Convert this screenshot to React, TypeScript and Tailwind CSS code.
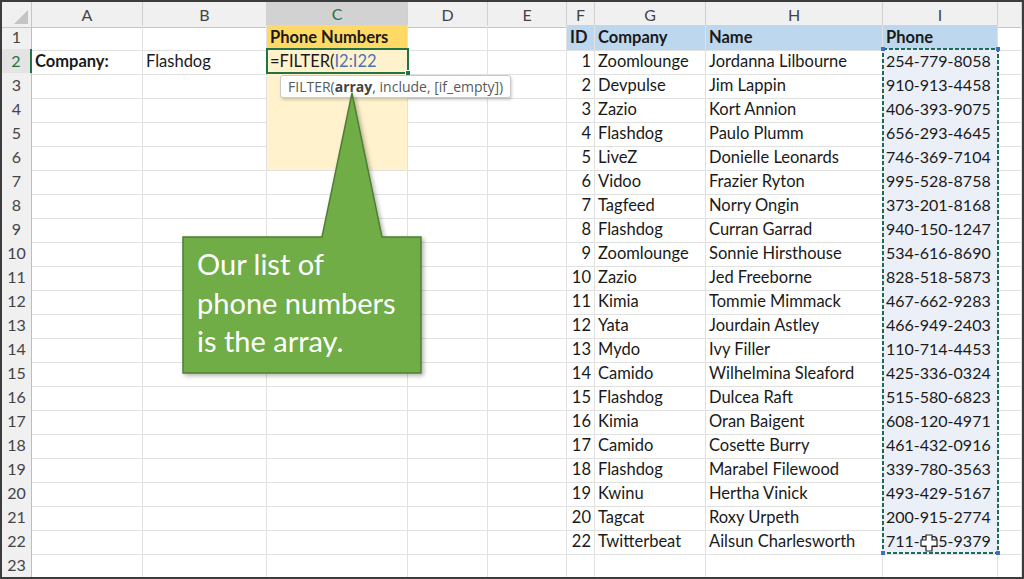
import React from "react";

const FONT = { fontFamily: "Lato, 'Open Sans', sans-serif" };

const data: [string, string, string, string][] = [
  ["1", "Zoomlounge", "Jordanna Lilbourne", "254-779-8058"],
  ["2", "Devpulse", "Jim Lappin", "910-913-4458"],
  ["3", "Zazio", "Kort Annion", "406-393-9075"],
  ["4", "Flashdog", "Paulo Plumm", "656-293-4645"],
  ["5", "LiveZ", "Donielle Leonards", "746-369-7104"],
  ["6", "Vidoo", "Frazier Ryton", "995-528-8758"],
  ["7", "Tagfeed", "Norry Ongin", "373-201-8168"],
  ["8", "Flashdog", "Curran Garrad", "940-150-1247"],
  ["9", "Zoomlounge", "Sonnie Hirsthouse", "534-616-8690"],
  ["10", "Zazio", "Jed Freeborne", "828-518-5873"],
  ["11", "Kimia", "Tommie Mimmack", "467-662-9283"],
  ["12", "Yata", "Jourdain Astley", "466-949-2403"],
  ["13", "Mydo", "Ivy Filler", "110-714-4453"],
  ["14", "Camido", "Wilhelmina Sleaford", "425-336-0324"],
  ["15", "Flashdog", "Dulcea Raft", "515-580-6823"],
  ["16", "Kimia", "Oran Baigent", "608-120-4971"],
  ["17", "Camido", "Cosette Burry", "461-432-0916"],
  ["18", "Flashdog", "Marabel Filewood", "339-780-3563"],
  ["19", "Kwinu", "Hertha Vinick", "493-429-5167"],
  ["20", "Tagcat", "Roxy Urpeth", "200-915-2774"],
  ["22", "Twitterbeat", "Ailsun Charlesworth", "711-525-9379"],
];

const GRID =
  "grid grid-cols-[30px_111px_124px_141px_80px_79px_28px_111px_177px_115px_24px]";

type CellProps = {
  children?: React.ReactNode;
  className?: string;
};

function Cell({ children, className = "" }: CellProps) {
  return (
    <div
      className={`flex items-center overflow-visible whitespace-nowrap border-r border-b border-[#e1e1e1] px-[3px] text-[#1a1a1a] ${className}`}
    >
      {children}
    </div>
  );
}

function ColHeader({ label, active }: { label: string; active?: boolean }) {
  return (
    <div
      className={`flex items-center justify-center border-r border-[#d0d0d0] text-[16px] ${
        active
          ? "bg-[#d2d2d2] text-[#217346] border-b-2 border-b-[#217346]"
          : "bg-[#f0f0f0] text-[#444] border-b border-b-[#c6c6c6]"
      }`}
    >
      {label}
    </div>
  );
}

function RowHeader({ n, active }: { n: number; active?: boolean }) {
  return (
    <div
      className={`flex items-center justify-center border-b border-[#d6d6d6] text-[16px] ${
        active
          ? "bg-[#e4e4e4] text-[#217346] border-r-2 border-r-[#217346]"
          : "bg-[#f0f0f0] text-[#444] border-r border-r-[#bdbdbd]"
      }`}
    >
      {n}
    </div>
  );
}

function Row({ r }: { r: number }) {
  const d = r >= 2 && r <= 22 ? data[r - 2] : null;
  const cBg =
    r === 1 ? "bg-[#ffd966]" : r >= 2 && r <= 6 ? "bg-[#fff2cc]" : "";
  const hd = "bg-[#bdd7ee] font-bold";
  return (
    <div className={`${GRID} h-[24px]`}>
      <RowHeader n={r} active={r === 2} />
      <Cell className="text-[16.5px] font-bold">{r === 2 ? "Company:" : ""}</Cell>
      <Cell className="text-[16.5px]">{r === 2 ? "Flashdog" : ""}</Cell>
      <Cell className={`text-[16.5px] ${cBg} ${r === 1 ? "font-bold" : ""}`}>
        {r === 1 ? "Phone Numbers" : r === 2 ? (
          <span>
            =FILTER(<span className="text-[#4a74b8]">I2:I22</span>
          </span>
        ) : ""}
      </Cell>
      <Cell />
      <Cell />
      <Cell className={`text-[16.5px] ${r === 1 ? `${hd} justify-start` : "justify-end"}`}>
        {r === 1 ? "ID" : d ? d[0] : ""}
      </Cell>
      <Cell className={`text-[16.5px] ${r === 1 ? hd : ""}`}>
        {r === 1 ? "Company" : d ? d[1] : ""}
      </Cell>
      <Cell className={`text-[16.5px] ${r === 1 ? hd : ""}`}>
        {r === 1 ? "Name" : d ? d[2] : ""}
      </Cell>
      <Cell
        className={`${r === 1 ? `text-[16.5px] ${hd}` : d ? "bg-[#ebf0f8] text-[16px]" : ""}`}
      >
        {r === 1 ? "Phone" : d ? d[3] : ""}
      </Cell>
      <Cell />
    </div>
  );
}

export default function App() {
  const rows = Array.from({ length: 23 }, (_, i) => i + 1);
  return (
    <div
      className="h-[579px] w-[1024px] overflow-hidden border-2 border-[#3c3c3c] bg-white"
      style={FONT}
    >
      <div className="relative h-full w-full">
        {/* column headers */}
        <div className={`${GRID} h-[23px]`}>
          <div className="relative border-r border-b border-[#c6c6c6] bg-[#f0f0f0]">
            <svg
              className="absolute right-[3px] bottom-[3px]"
              width="14"
              height="14"
              viewBox="0 0 14 14"
            >
              <polygon points="14,0 14,14 0,14" fill="#c4c4c4" />
            </svg>
          </div>
          {["A", "B", "C", "D", "E", "F", "G", "H", "I", ""].map((l) => (
            <ColHeader key={l || "J"} label={l} active={l === "C"} />
          ))}
        </div>
        {rows.map((r) => (
          <Row key={r} r={r} />
        ))}

        {/* selected cell C2 */}
        <div className="pointer-events-none absolute left-[264px] top-[46px] h-[26px] w-[143px] border-2 border-[#217346]">
          <div className="absolute -right-[4px] -bottom-[4px] h-[6px] w-[6px] border border-white bg-[#217346]" />
        </div>

        {/* marching ants around I2:I22 */}
        <svg
          className="pointer-events-none absolute left-[879px] top-[45px]"
          width="120"
          height="510"
          viewBox="0 0 120 510"
        >
          <rect
            x="2"
            y="2"
            width="115"
            height="504"
            fill="none"
            stroke="#1f6b5a"
            strokeWidth="2"
            strokeDasharray="4 2"
          />
          <rect x="0" y="0" width="4" height="4" fill="#3d6fc6" />
          <rect x="115" y="0" width="4" height="4" fill="#3d6fc6" />
          <rect x="0" y="504" width="4" height="4" fill="#3d6fc6" />
          <rect x="115" y="504" width="4" height="4" fill="#3d6fc6" />
        </svg>

        {/* tooltip */}
        <div
          className="absolute left-[278px] top-[73px] flex h-[23px] items-center rounded-[3px] border border-[#c9c9c9] bg-white px-[7px] text-[14px] text-[#5a5a5a] shadow-[1px_2px_3px_rgba(0,0,0,0.18)]"
          style={{ fontFamily: "'Open Sans', sans-serif" }}
        >
          FILTER(<span className="font-bold text-[#444]">array</span>, include, [if_empty])
        </div>

        {/* callout */}
        <svg
          className="pointer-events-none absolute left-[176px] top-[86px]"
          width="256"
          height="296"
          viewBox="0 0 256 296"
        >
          <defs>
            <filter id="sh" x="-10%" y="-10%" width="130%" height="130%">
              <feDropShadow dx="2" dy="2" stdDeviation="2" floodColor="#000" floodOpacity="0.3" />
            </filter>
          </defs>
          <path
            d="M5 149 L144 149 L174 5 L204 149 L243 149 L243 285 L5 285 Z"
            fill="#70ad47"
            stroke="#507e32"
            strokeWidth="1.5"
            filter="url(#sh)"
          />
        </svg>
        <div className="pointer-events-none absolute left-[195px] top-[243px] text-[29px] leading-[38.5px] text-white">
          <div>Our list of</div>
          <div>phone numbers</div>
          <div>is the array.</div>
        </div>

        {/* cursor */}
        <svg
          className="pointer-events-none absolute left-[918px] top-[532px]"
          width="18"
          height="18"
          viewBox="0 0 18 18"
        >
          <path
            d="M6 1 H12 V6 H17 V12 H12 V17 H6 V12 H1 V6 H6 Z"
            fill="#fff"
            stroke="#222"
            strokeWidth="1.2"
          />
        </svg>
      </div>
    </div>
  );
}
